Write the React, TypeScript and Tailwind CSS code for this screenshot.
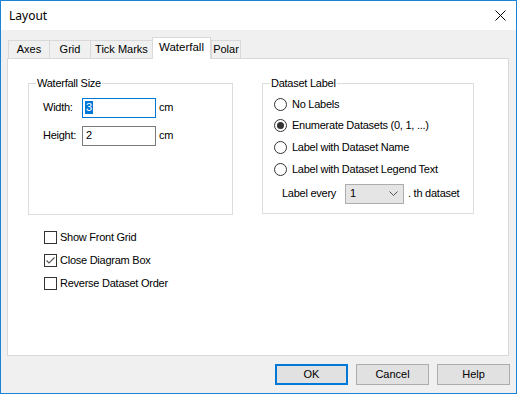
import React from "react";

const font = { fontFamily: '"Liberation Sans", Arial, sans-serif' };

const tabs = [
  { label: "Axes", w: "w-[42px]" },
  { label: "Grid", w: "w-[42px]" },
  { label: "Tick Marks", w: "w-[63px]" },
  { label: "Waterfall", w: "w-[59px]", active: true },
  { label: "Polar", w: "w-[30px]" },
];

function Radio({ label, checked }: { label: string; checked?: boolean }) {
  return (
    <div className="flex items-center h-[21px]">
      <span className="w-[13px] h-[13px] rounded-full border border-[#333] bg-white flex items-center justify-center">
        {checked && <span className="w-[7px] h-[7px] rounded-full bg-[#333]" />}
      </span>
      <span className="ml-[5px]">{label}</span>
    </div>
  );
}

function Check({ label, checked }: { label: string; checked?: boolean }) {
  return (
    <div className="flex items-center h-[23px]">
      <span className="w-[13px] h-[13px] border border-[#333] bg-white flex items-center justify-center">
        {checked && (
          <svg width="11" height="11" viewBox="0 0 11 11">
            <path d="M1.5 5.5 L4 8 L9.5 2.5" fill="none" stroke="#555" strokeWidth="1.1" />
          </svg>
        )}
      </span>
      <span className="ml-[3px]">{label}</span>
    </div>
  );
}

function Button({ label, primary }: { label: string; primary?: boolean }) {
  return (
    <button
      className={
        "w-[73px] h-[21px] bg-[#e1e1e1] text-[11px] text-black flex items-center justify-center " +
        (primary ? "border-2 border-[#0078d7]" : "border border-[#adadad]")
      }
    >
      {label}
    </button>
  );
}

export default function App() {
  return (
    <div
      className="w-[517px] h-[394px] border border-[#1883d7] flex flex-col text-[11px] text-black overflow-hidden"
      style={font}
    >
      {/* Title bar */}
      <div className="h-[29px] bg-white flex items-center justify-between pl-[8px] pr-[10px]">
        <span className="text-[12px]" style={{ fontFamily: '"Noto Sans", "Open Sans", sans-serif' }}>
          Layout
        </span>
        <svg width="11" height="11" viewBox="0 0 11 11">
          <path d="M0.5 0.5 L10.5 10.5 M10.5 0.5 L0.5 10.5" stroke="#000" strokeWidth="1" />
        </svg>
      </div>

      {/* Body */}
      <div className="flex-1 bg-[#f0f0f0] flex flex-col pt-[7px] pl-[6px]">
        {/* Tab strip */}
        <div className="flex items-end h-[21px] pl-[1px] relative z-10">
          {tabs.map((t) =>
            t.active ? (
              <div
                key={t.label}
                className={t.w + " h-[22px] -mb-px bg-white border border-b-0 border-[#d9d9d9] flex items-center justify-center pb-[2px] text-[11.5px]"}
              >
                {t.label}
              </div>
            ) : (
              <div
                key={t.label}
                className={t.w + " h-[18px] bg-[#f0f0f0] border border-b-0 border-[#d9d9d9] -mr-px flex items-center justify-center"}
              >
                {t.label}
              </div>
            )
          )}
        </div>

        {/* Tab panel */}
        <div className="w-[502px] h-[298px] bg-white border border-[#d9d9d9] pl-[20px] pt-[16px] tracking-[-0.25px]">
          <div className="flex gap-[29px]">
            <fieldset className="w-[205px] h-[140px] border border-[#dcdcdc]">
              <legend className="ml-[7px] px-[1px]">Waterfall Size</legend>
              <div className="pl-[14px]">
                <div className="flex items-center mt-[6px] h-[20px]">
                  <span className="w-[39px]">Width:</span>
                  <span className="w-[74px] h-[20px] border border-[#0078d7] bg-white flex items-center pl-[2px]">
                    <span className="bg-[#0078d7] text-white leading-[13px] px-px">3</span>
                  </span>
                  <span className="ml-[3px]">cm</span>
                </div>
                <div className="flex items-center mt-[8px] h-[20px]">
                  <span className="w-[39px]">Height:</span>
                  <span className="w-[74px] h-[20px] border border-[#7a7a7a] bg-white flex items-center pl-[3px]">2</span>
                  <span className="ml-[3px]">cm</span>
                </div>
              </div>
            </fieldset>

            <fieldset className="w-[212px] h-[139px] border border-[#dcdcdc]">
              <legend className="ml-[7px] px-[1px]">Dataset Label</legend>
              <div className="pl-[11px]">
                <div className="mt-[2px]">
                  <Radio label="No Labels" />
                  <Radio label="Enumerate Datasets (0, 1, ...)" checked />
                  <div className="h-[1px]" />
                  <Radio label="Label with Dataset Name" />
                  <div className="h-[1px]" />
                  <Radio label="Label with Dataset Legend Text" />
                </div>
                <div className="flex items-center mt-[4px] pl-[8px]">
                  <span className="w-[63px]">Label every</span>
                  <span className="w-[59px] h-[20px] bg-[#e5e5e5] border border-[#adadad] flex items-center justify-between pl-[4px] pr-[5px]">
                    <span>1</span>
                    <svg width="9" height="6" viewBox="0 0 9 6">
                      <path d="M0.5 0.5 L4.5 4.5 L8.5 0.5" fill="none" stroke="#555" strokeWidth="1" />
                    </svg>
                  </span>
                  <span className="ml-[4px]">. th dataset</span>
                </div>
              </div>
            </fieldset>
          </div>

          <div className="pl-[16px] mt-[11px]">
            <Check label="Show Front Grid" />
            <Check label="Close Diagram Box" checked />
            <Check label="Reverse Dataset Order" />
          </div>
        </div>

        {/* Buttons */}
        <div className="flex justify-end gap-[8px] mt-[8px] pr-[6px]">
          <Button label="OK" primary />
          <Button label="Cancel" />
          <Button label="Help" />
        </div>
      </div>
    </div>
  );
}
